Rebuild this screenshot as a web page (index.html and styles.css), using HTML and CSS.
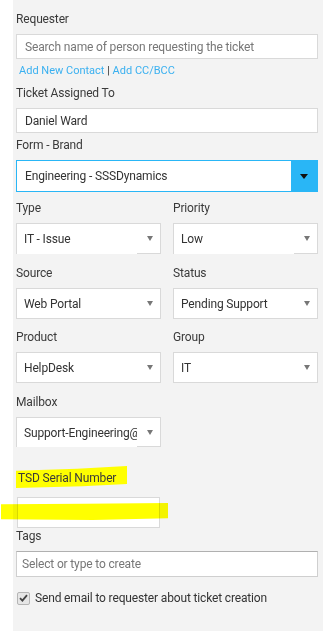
FILE: index.html
```html
<!DOCTYPE html>
<html>
<head>
<meta charset="utf-8">
<link rel="stylesheet" href="styles.css">
</head>
<body>
<div class="panel">
  <div class="lbl">Requester</div>
  <div class="input ph">Search name of person requesting the ticket</div>
  <div class="links"><span class="lnk">Add New Contact</span> <span class="bar">|</span> <span class="lnk">Add CC/BCC</span></div>

  <div class="lbl m7">Ticket Assigned To</div>
  <div class="input">Daniel Ward</div>

  <div class="lbl m4">Form - Brand</div>
  <div class="brand">
    <div class="brand-text">Engineering - SSSDynamics</div>
    <div class="brand-btn"><span class="tri-dark"></span></div>
  </div>

  <div class="grid m8">
    <div class="col">
      <div class="lbl">Type</div>
      <div class="sel cut"><div class="sel-text">IT - Issue</div><div class="sel-arrow"><span class="tri"></span></div></div>
    </div>
    <div class="col">
      <div class="lbl">Priority</div>
      <div class="sel cut"><div class="sel-text">Low</div><div class="sel-arrow"><span class="tri"></span></div></div>
    </div>
  </div>

  <div class="grid m11">
    <div class="col">
      <div class="lbl">Source</div>
      <div class="sel"><div class="sel-text">Web Portal</div><div class="sel-arrow"><span class="tri"></span></div></div>
    </div>
    <div class="col">
      <div class="lbl">Status</div>
      <div class="sel"><div class="sel-text">Pending Support</div><div class="sel-arrow"><span class="tri"></span></div></div>
    </div>
  </div>

  <div class="grid m10">
    <div class="col">
      <div class="lbl">Product</div>
      <div class="sel"><div class="sel-text">HelpDesk</div><div class="sel-arrow"><span class="tri"></span></div></div>
    </div>
    <div class="col">
      <div class="lbl">Group</div>
      <div class="sel"><div class="sel-text">IT</div><div class="sel-arrow"><span class="tri"></span></div></div>
    </div>
  </div>

  <div class="grid m11">
    <div class="col">
      <div class="lbl">Mailbox</div>
      <div class="sel cut short"><div class="sel-text clip">Support-Engineering@sssdynamics.com</div><div class="sel-arrow"><span class="tri"></span></div></div>
    </div>
  </div>

  <div class="lbl hl m23"><span class="hl-text">TSD Serial Number</span></div>
  <div class="serial"><span class="band"></span></div>

  <div class="lbl">Tags</div>
  <div class="input tags ph">Select or type to create</div>

  <div class="check-row">
    <span class="cb"><svg width="9" height="8" viewBox="0 0 9 8"><path d="M1 4.2 L3.4 6.6 L8 1.2" fill="none" stroke="#444" stroke-width="1.8"/></svg></span>
    <span class="cb-text">Send email to requester about ticket creation</span>
  </div>
</div>
</body>
</html>
```

FILE: styles.css
```css
html, body {
  margin: 0;
  padding: 0;
  background: #ffffff;
}
.panel {
  margin-left: 13px;
  min-height: 631px;
  box-sizing: border-box;
  background: #f3f3f3;
  padding: 11px 5px 0 3px;
  font-family: Roboto, "Liberation Sans", sans-serif;
  font-size: 12px;
  letter-spacing: -0.15px;
  color: #333;
}
.lbl {
  display: block;
  line-height: 16px;
  height: 16px;
  margin-bottom: 7px;
  color: #3a3a3a;
  font-size: 12px;
}
.m4 { margin-top: 4px; }
.m7 { margin-top: 7px; }
.m8 { margin-top: 8px; }
.m10 { margin-top: 10px; }
.m11 { margin-top: 11px; }
.m23 { margin-top: 23px; }
.input {
  height: 25px;
  box-sizing: border-box;
  border: 1px solid #d9d9d9;
  background: #fff;
  padding: 0 8px;
  display: flex;
  align-items: center;
  color: #333;
}
.ph { color: #777; }
.links {
  margin-top: 5px;
  line-height: 14px;
  font-size: 11px;
  letter-spacing: 0;
  padding-left: 3px;
}
.lnk { color: #3ab0f0; }
.bar { color: #333; }
.brand {
  height: 32px;
  box-sizing: border-box;
  border: 1px solid #29b6f6;
  background: #fff;
  display: flex;
}
.brand-text {
  flex: 1;
  display: flex;
  align-items: center;
  padding-left: 8px;
  color: #333;
}
.brand-btn {
  width: 26px;
  background: #29b6f6;
  display: flex;
  align-items: center;
  justify-content: center;
}
.tri-dark {
  width: 0;
  height: 0;
  border-left: 4px solid transparent;
  border-right: 4px solid transparent;
  border-top: 5px solid #111;
}
.grid {
  display: grid;
  grid-template-columns: 145px 145px;
  column-gap: 12px;
}
.sel {
  height: 31px;
  box-sizing: border-box;
  border: 1px solid #d9d9d9;
  background: #fff;
  display: flex;
}
.sel.short { height: 30px; }
.sel-text {
  width: 120px;
  box-sizing: border-box;
  padding-left: 7px;
  display: flex;
  align-items: center;
  background: #fff;
  color: #333;
  white-space: nowrap;
  overflow: hidden;
}
.sel.cut .sel-text {
  margin-bottom: -1px;
  position: relative;
}
.sel-arrow {
  flex: 1;
  display: flex;
  align-items: center;
  justify-content: flex-end;
  padding-right: 7px;
}
.tri {
  width: 0;
  height: 0;
  border-left: 3.5px solid transparent;
  border-right: 3.5px solid transparent;
  border-top: 5px solid #777;
}
.hl {
  position: relative;
}
.hl::before {
  content: "";
  position: absolute;
  left: 0;
  top: -4px;
  width: 111px;
  height: 22px;
  background: #ffff00;
  clip-path: polygon(0 22%, 55% 12%, 100% 0, 100% 82%, 60% 92%, 0 100%);
}
.hl-text {
  position: relative;
  padding-left: 2px;
}
.serial {
  position: relative;
  margin-top: 11px;
  width: 143px;
  height: 31px;
  box-sizing: border-box;
  border: 1px solid #d9d9d9;
  background: #fff;
  margin-left: 1px;
}
.band {
  position: absolute;
  left: -17px;
  top: 5px;
  width: 167px;
  height: 17px;
  background: #ffff00;
  mix-blend-mode: multiply;
  clip-path: polygon(0 8%, 50% 4%, 100% 0, 100% 90%, 55% 100%, 0 96%);
}
.tags {
  height: 26px;
  padding-left: 5px;
  border-color: #cfcfcf;
  border-top-color: #b0b0b0;
}
.check-row {
  margin-top: 13px;
  display: flex;
  align-items: center;
  height: 16px;
}
.cb {
  width: 11px;
  height: 11px;
  border: 1px solid #b5b5b5;
  background: #e6e6e6;
  border-radius: 2px;
  display: flex;
  align-items: center;
  justify-content: center;
  margin-left: 1px;
}
.cb-text {
  margin-left: 5px;
  color: #333;
}
```
